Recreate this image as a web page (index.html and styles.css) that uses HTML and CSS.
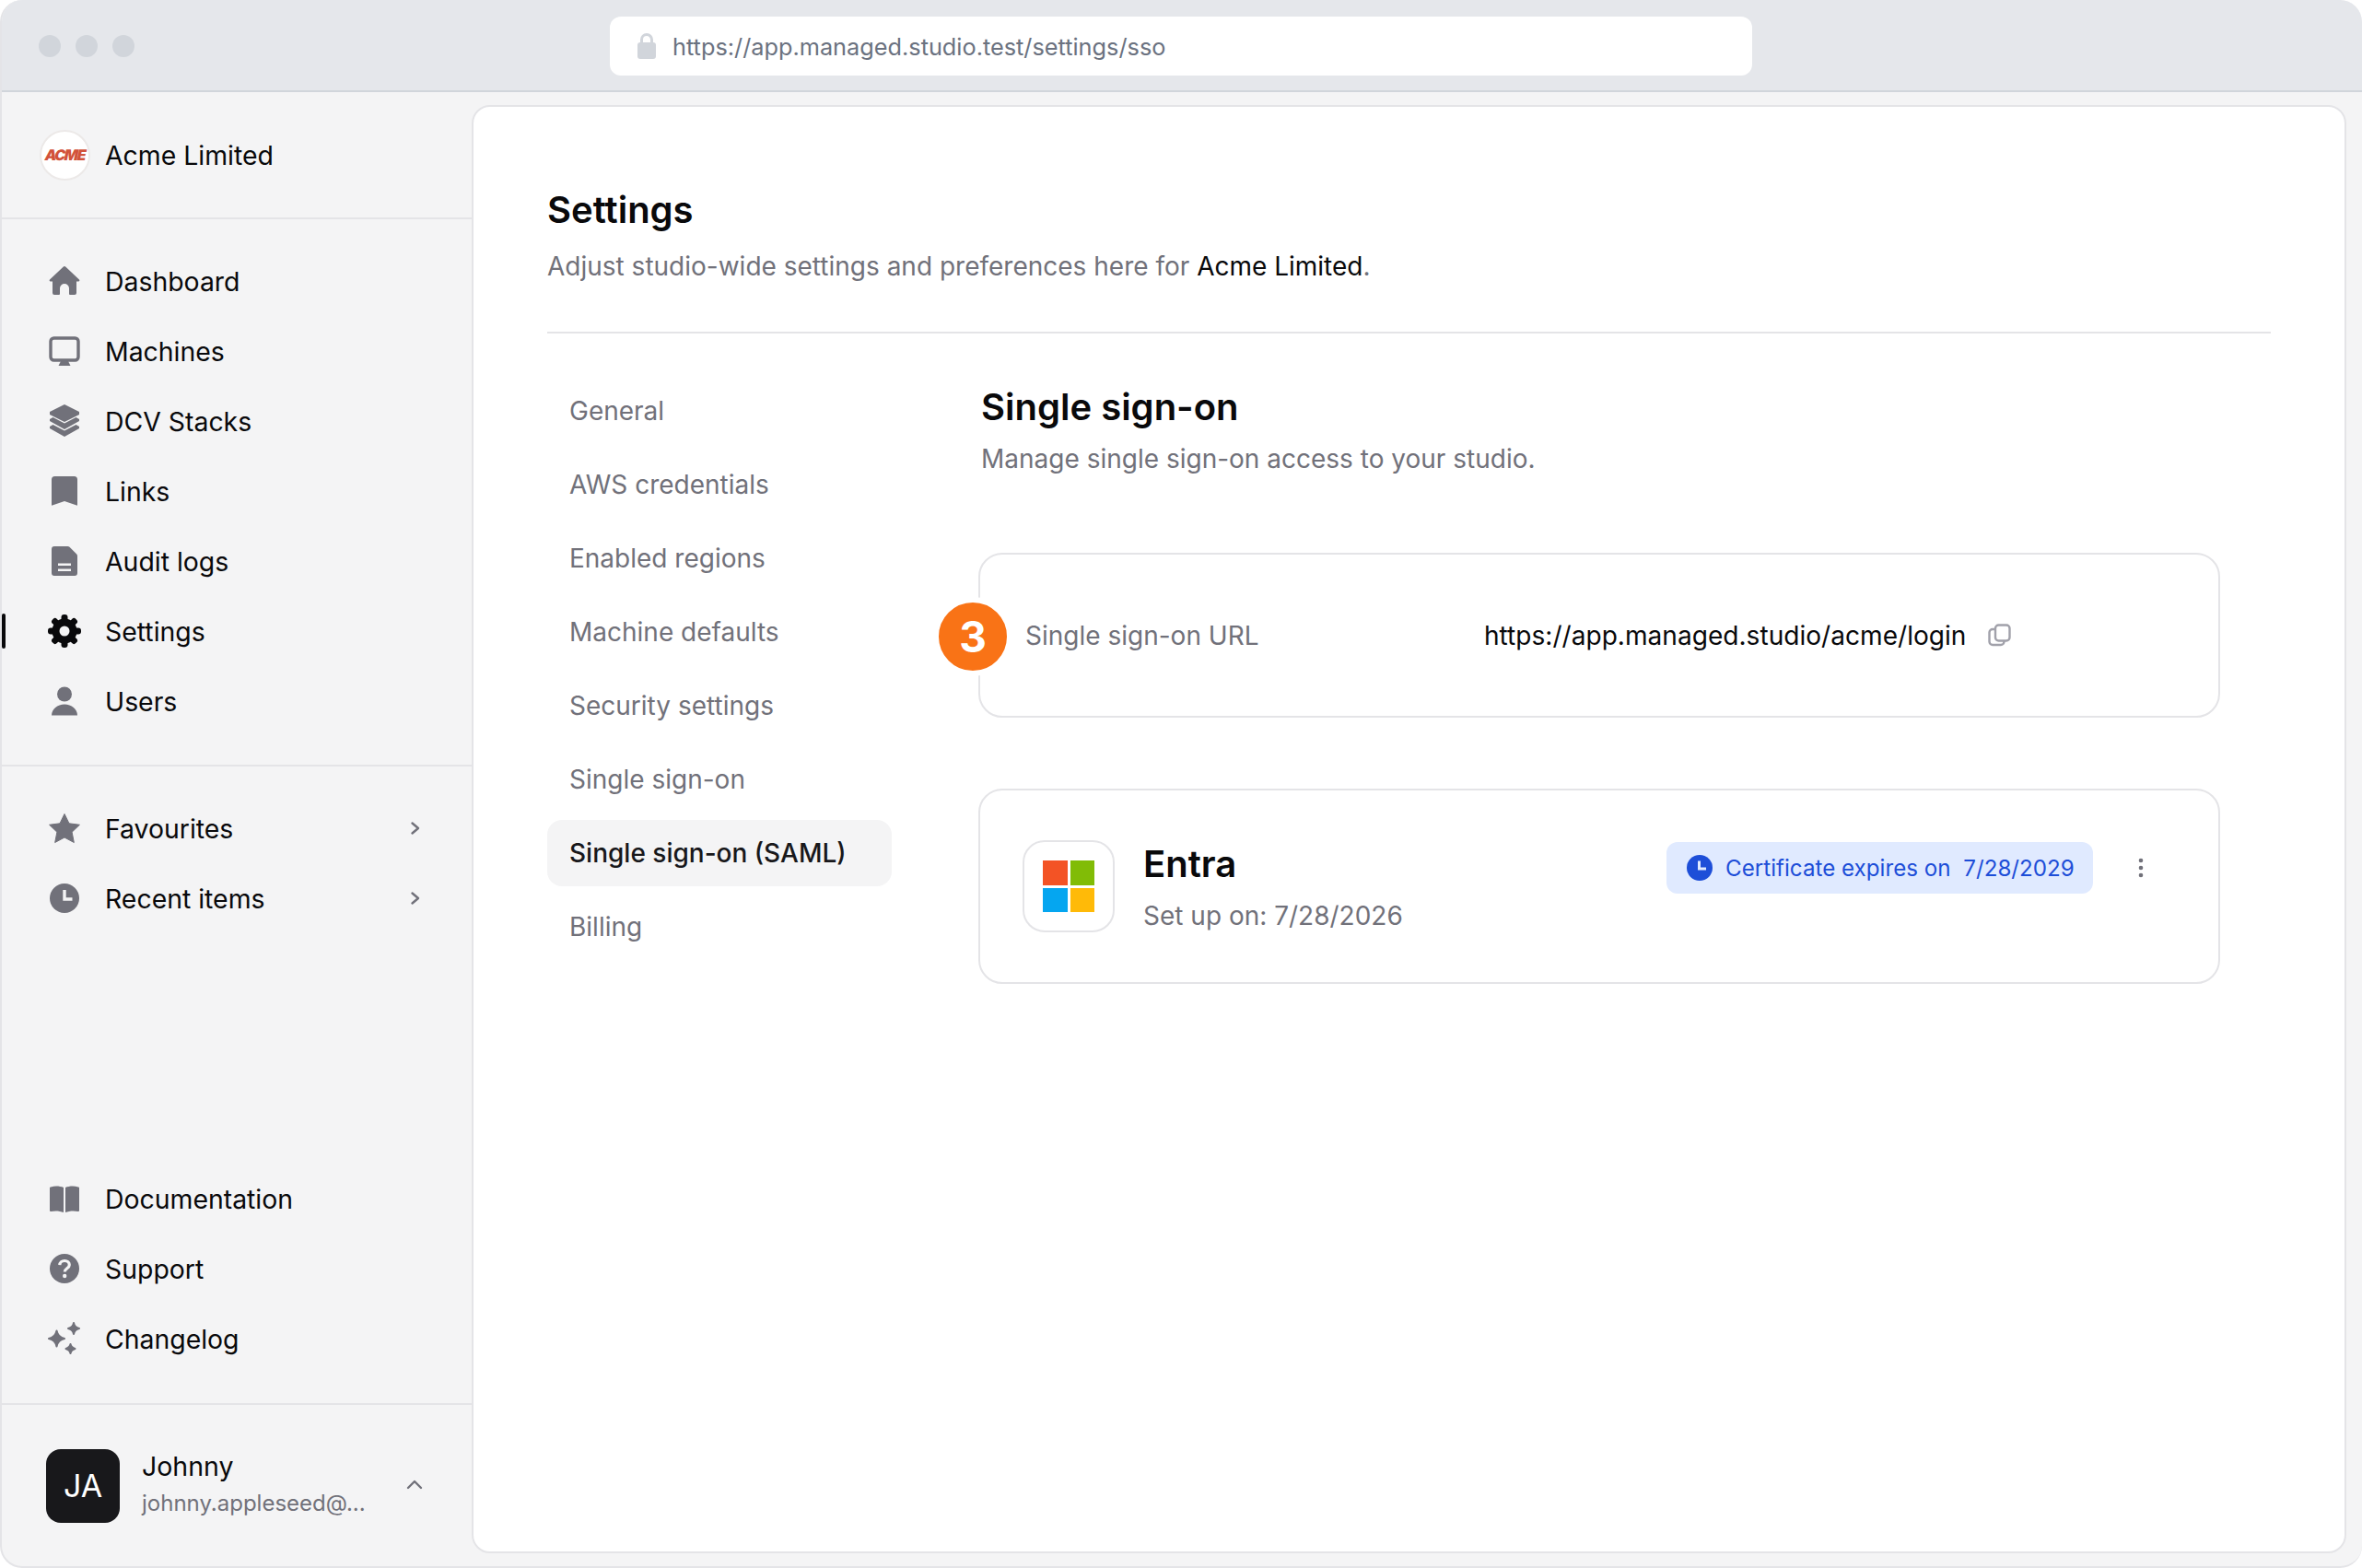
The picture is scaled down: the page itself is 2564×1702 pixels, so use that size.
FILE: index.html
```html
<!DOCTYPE html>
<html lang="en">
<head>
<meta charset="utf-8">
<title>Settings</title>
<link rel="stylesheet" href="styles.css">
</head>
<body>
<div class="window">
  <header class="topbar">
    <div class="lights"><span class="light"></span><span class="light"></span><span class="light"></span></div>
    <div class="urlbar">
      <svg class="lock" viewBox="0 0 20 28"><path d="M4.500 12V7a5.500 5.500 0 0 1 11 0v5" fill="none" stroke="#d1d5db" stroke-width="3"/><rect x="0" y="10" width="20" height="18" rx="3" fill="#d1d5db"/></svg>
      <span>https://app.managed.studio.test/settings/sso</span>
    </div>
  </header>
  <div class="app">
    <aside class="sidebar">
      <div class="brand">
        <div class="logo"><span class="logo-text">ACME</span></div>
        <span>Acme Limited</span>
      </div>
      <nav class="group group-main">
        <a class="row"><svg class="ico" viewBox="0 0 36 36"><path d="M16.600 2.800a2 2 0 0 1 2.800 0L34 16.500c.8.800.3 2-.8 2H31V31a2 2 0 0 1-2 2h-5a1 1 0 0 1-1-1v-6a5 5 0 0 0-10 0v6a1 1 0 0 1-1 1H7a2 2 0 0 1-2-2V18.500H2.800c-1.100 0-1.600-1.200-.8-2z"/></svg>Dashboard</a>
        <a class="row"><svg class="ico" viewBox="0 0 36 36"><rect x="3" y="4" width="30" height="24" rx="3.500" fill="none" stroke="#71717a" stroke-width="3.400"/><path d="M14 29h8l2.500 5h-13z"/></svg>Machines</a>
        <a class="row"><svg class="ico" viewBox="0 0 36 36"><path d="M18 0l16 8v3L18 19 2 11V8z"/><path d="M5.500 14L18 20.500 30.500 14l3.500 2v2L18 27 2 18v-2z"/><path d="M5.500 22L18 28.500 30.500 22l3.500 2v2L18 35 2 26v-2z"/></svg>DCV Stacks</a>
        <a class="row"><svg class="ico" viewBox="0 0 36 36"><path d="M7.500 2h21A3.500 3.500 0 0 1 32 5.500V33a.6.600 0 0 1-.8.600L18 29 4.800 33.600A.6.600 0 0 1 4 33V5.500A3.500 3.500 0 0 1 7.500 2z"/></svg>Links</a>
        <a class="row"><svg class="ico" viewBox="0 0 36 36"><path fill-rule="evenodd" d="M7 2h14.500a3 3 0 0 1 2 .8L31 10.200a3 3 0 0 1 1 2.200V31a3 3 0 0 1-3 3H7a3 3 0 0 1-3-3V5a3 3 0 0 1 3-3zm4 18.500v2.500h14v-2.500zm0 6v2.500h14v-2.500z"/></svg>Audit logs</a>
        <a class="row row-active"><svg class="ico ico-dark" viewBox="0 0 36 36"><g><rect x="14.500" y="0" width="7" height="36" rx="3"/><rect x="14.500" y="0" width="7" height="36" rx="3" transform="rotate(45 18 18)"/><rect x="14.500" y="0" width="7" height="36" rx="3" transform="rotate(90 18 18)"/><rect x="14.500" y="0" width="7" height="36" rx="3" transform="rotate(135 18 18)"/></g><circle cx="18" cy="18" r="9.500" fill="none" stroke="#09090b" stroke-width="8"/><circle cx="18" cy="18" r="5.500" fill="#f4f4f5"/></svg>Settings</a>
        <a class="row"><svg class="ico" viewBox="0 0 36 36"><circle cx="18" cy="10.500" r="8"/><path d="M4 33.500c0-7 6.500-12 14-12s14 5 14 12z"/></svg>Users</a>
      </nav>
      <nav class="group group-fill">
        <a class="row"><svg class="ico" viewBox="0 0 36 36"><path d="M18 2.500l5 10.300 11.400 1.500-8.300 7.900 2.200 11.300L18 28l-10.300 5.500 2.200-11.300-8.300-7.900L13 12.800z" stroke="#71717a" stroke-width="1" stroke-linejoin="round"/></svg>Favourites<svg class="chev" viewBox="0 0 12 16"><path d="M2.500 2.500L9 8l-6.500 5.500" fill="none" stroke="#71717a" stroke-width="2.400" stroke-linecap="round" stroke-linejoin="round"/></svg></a>
        <a class="row"><svg class="ico" viewBox="0 0 36 36"><circle cx="18" cy="18" r="16"/><path d="M18 9v10h8.500" fill="none" stroke="#f4f4f5" stroke-width="3.400"/></svg>Recent items<svg class="chev" viewBox="0 0 12 16"><path d="M2.500 2.500L9 8l-6.500 5.500" fill="none" stroke="#71717a" stroke-width="2.400" stroke-linecap="round" stroke-linejoin="round"/></svg></a>
      </nav>
      <nav class="group group-help">
        <a class="row"><svg class="ico" viewBox="0 0 36 36"><path d="M3 5.500c5-1.500 10-1 14 .5v27c-4-1.700-9-2-14-1a1 1 0 0 1-1-1V6.500a1 1 0 0 1 1-1z"/><path d="M33 5.500c-5-1.500-10-1-14 .5v27c4-1.700 9-2 14-1a1 1 0 0 0 1-1V6.500a1 1 0 0 0-1-1z"/></svg>Documentation</a>
        <a class="row"><svg class="ico" viewBox="0 0 36 36"><circle cx="18" cy="18" r="16"/><path d="M12.800 14.200c.2-3 2.500-4.700 5.300-4.700 3 0 5.200 1.800 5.200 4.500 0 3.800-5 3.700-5 7.500" fill="none" stroke="#f4f4f5" stroke-width="3.200"/><circle cx="18.200" cy="26" r="2.200" fill="#f4f4f5"/></svg>Support</a>
        <a class="row"><svg class="ico" viewBox="0 0 36 36"><path d="M9.500 9.500c1 5 3 7.500 8.500 8.500-5.500 1-7.500 3.500-8.500 8.500-1-5-3-7.500-8.500-8.500 5.500-1 7.500-3.500 8.500-8.500z" stroke="#71717a" stroke-width="2" stroke-linejoin="round"/><path d="M28 1c.7 3.800 2.300 5.300 6 6-3.700.7-5.300 2.200-6 6-.7-3.800-2.300-5.300-6-6 3.700-.7 5.300-2.200 6-6z" stroke="#71717a" stroke-width="2" stroke-linejoin="round"/><path d="M24.500 24c.6 3 1.700 4 5 5-3.300 1-4.400 2-5 5-.6-3-1.700-4-5-5 3.300-1 4.400-2 5-5z" stroke="#71717a" stroke-width="2" stroke-linejoin="round"/></svg>Changelog</a>
      </nav>
      <div class="account">
        <div class="avatar">JA</div>
        <div class="who">
          <div class="who-name">Johnny</div>
          <div class="who-mail">johnny.appleseed@...</div>
        </div>
        <svg class="chev-up" viewBox="0 0 18 12"><path d="M2 10L9 3l7 7" fill="none" stroke="#71717a" stroke-width="2.400" stroke-linecap="round" stroke-linejoin="round"/></svg>
      </div>
    </aside>
    <main class="main">
      <header class="head">
        <h1 class="h1">Settings</h1>
        <p class="sub">Adjust studio-wide settings and preferences here for <span class="ink">Acme Limited</span>.</p>
      </header>
      <div class="cols">
        <nav class="subnav">
          <a class="sub-item">General</a>
          <a class="sub-item">AWS credentials</a>
          <a class="sub-item">Enabled regions</a>
          <a class="sub-item">Machine defaults</a>
          <a class="sub-item">Security settings</a>
          <a class="sub-item">Single sign-on</a>
          <a class="sub-item sub-active">Single sign-on (SAML)</a>
          <a class="sub-item">Billing</a>
        </nav>
        <section class="content">
          <h2 class="h2">Single sign-on</h2>
          <p class="sub sub-2">Manage single sign-on access to your studio.</p>
          <div class="card card-url">
            <span class="step">3</span>
            <span class="url-label">Single sign-on URL</span>
            <span class="url-value">https://app.managed.studio/acme/login</span>
            <svg class="copy" viewBox="0 0 25 25"><rect x="8" y="1.500" width="15.500" height="17" rx="3.500" fill="none" stroke="#a1a1aa" stroke-width="2.400"/><path d="M8 6H5a3.500 3.500 0 0 0-3.500 3.500v10A3.500 3.500 0 0 0 5 23h9a3.500 3.500 0 0 0 3.500-3.500V18" fill="none" stroke="#a1a1aa" stroke-width="2.400"/></svg>
          </div>
          <div class="card card-idp">
            <div class="idp-logo">
              <div class="ms"><i class="ms-r"></i><i class="ms-g"></i><i class="ms-b"></i><i class="ms-y"></i></div>
            </div>
            <div class="idp-text">
              <div class="idp-name">Entra</div>
              <div class="idp-date">Set up on: 7/28/2026</div>
            </div>
            <div class="chip">
              <svg class="chip-ico" viewBox="0 0 28 28"><circle cx="14" cy="14" r="14" fill="#1d4ed8"/><path d="M13.500 6.500V15H21" fill="none" stroke="#e0eaff" stroke-width="3"/></svg>
              <span>Certificate expires on&nbsp; 7/28/2029</span>
            </div>
            <svg class="dots" viewBox="0 0 6 22"><circle cx="3" cy="3" r="2.300"/><circle cx="3" cy="11" r="2.300"/><circle cx="3" cy="19" r="2.300"/></svg>
          </div>
        </section>
      </div>
    </main>
  </div>
</div>
</body>
</html>
```
FILE: styles.css
```css
* { box-sizing: border-box; }
html, body { margin: 0; padding: 0; background: #fff; }
body { font-family: Inter, "Liberation Sans", sans-serif; color: #09090b; }
p, h1, h2 { margin: 0; }

.window { width: 2564px; height: 1702px; display: flex; flex-direction: column; background: #f4f4f5; border: 2px solid #e4e4e7; border-top: 0; border-right: 0; border-radius: 24px; overflow: hidden; }

.topbar { height: 100px; margin-left: -2px; background: #e5e7eb; border-bottom: 2px solid #d1d5db; position: relative; display: flex; justify-content: center; align-items: flex-start; padding-top: 18px; flex: none; }
.lights { position: absolute; left: 42px; top: 38px; display: flex; gap: 16px; }
.light { width: 24px; height: 24px; border-radius: 50%; background: #d1d5db; }
.urlbar { width: 1240px; height: 64px; background: #fff; border-radius: 12px; display: flex; align-items: center; gap: 18px; padding-left: 30px; font-size: 25.300px; color: #6b7280; }
.lock { width: 20px; height: 28px; flex: none; }

.app { flex: 1; display: flex; min-height: 0; }
.sidebar { width: 510px; flex: none; display: flex; flex-direction: column; }
.brand { height: 138px; flex: none; display: flex; align-items: center; gap: 16px; padding-left: 41px; font-size: 28.400px; border-bottom: 2px solid #e4e4e7; }
.logo { width: 55px; height: 55px; border-radius: 50%; background: #fff; border: 2px solid #ece9e8; display: flex; align-items: center; justify-content: center; flex: none; }
.logo-text { font-family: Inter, sans-serif; font-weight: 900; font-size: 16px; color: #d2523a; letter-spacing: -1.400px; transform: skewX(-12deg); }

.group { display: flex; flex-direction: column; }
.group-main { padding: 29px 0 31px; border-bottom: 2px solid #e4e4e7; }
.group-fill { padding-top: 29px; flex: 1; }
.group-help { padding-bottom: 32px; border-bottom: 2px solid #e4e4e7; }
.row { height: 76px; display: flex; align-items: center; padding-left: 50px; font-size: 28.400px; position: relative; color: #09090b; }
.ico { width: 36px; height: 36px; flex: none; margin-right: 26px; fill: #71717a; }
.ico-dark { fill: #09090b; }
.row-active::before { content: ""; position: absolute; left: 0; top: 19px; width: 4px; height: 38px; background: #09090b; border-radius: 2px; }
.chev { width: 12px; height: 16px; position: absolute; left: 443px; top: 30px; }

.account { height: 175px; flex: none; display: flex; align-items: center; padding-left: 48px; position: relative; }
.avatar { width: 80px; height: 80px; border-radius: 16px; background: #18181b; color: #fff; font-size: 34px; display: flex; align-items: center; justify-content: center; flex: none; margin-right: 24px; }
.who { display: flex; flex-direction: column; gap: 4px; margin-top: -3px; }
.who-name { font-size: 28.500px; line-height: 38px; }
.who-mail { font-size: 24px; line-height: 34px; color: #71717a; }
.chev-up { width: 18px; height: 12px; position: absolute; left: 439px; top: 80px; }

.main { flex: 1; margin: 14px 17px 14px 0; background: #fff; border: 2px solid #e4e4e7; border-radius: 20px; padding: 84px 80px 0 80px; min-width: 0; }
.head { height: 162px; border-bottom: 2px solid #e4e4e7; }
.h1 { font-size: 40px; font-weight: 600; line-height: 56px; }
.sub { font-size: 28px; line-height: 40px; color: #71717a; margin-top: 13px; }
.ink { color: #09090b; }
.cols { display: flex; }
.subnav { width: 374px; flex: none; padding-top: 48px; display: flex; flex-direction: column; gap: 8px; }
.sub-item { height: 72px; display: flex; align-items: center; padding-left: 24px; font-size: 28px; color: #71717a; border-radius: 16px; }
.sub-active { background: #f4f4f5; color: #18181b; font-weight: 500; }
.content { flex: 1; padding-left: 94px; padding-top: 52px; min-width: 0; }
.h2 { font-size: 40px; font-weight: 600; line-height: 56px; padding-left: 3px; }
.sub-2 { padding-left: 3px; margin-top: 8px; }

.card { width: 1348px; border: 2px solid #e4e4e7; border-radius: 26px; background: #fff; display: flex; align-items: center; position: relative; }
.card-url { height: 179px; margin-top: 82px; padding-left: 49px; }
.step { position: absolute; left: -51px; top: 46px; width: 86px; height: 86px; border: 6px solid #fff; border-radius: 50%; background: #f97316; color: #fff; font-size: 46px; font-weight: 700; display: flex; align-items: center; justify-content: center; }
.url-label { width: 498px; font-size: 28px; color: #71717a; flex: none; }
.url-value { font-size: 28.100px; }
.copy { width: 25px; height: 25px; margin-left: 24px; flex: none; }

.card-idp { height: 212px; margin-top: 77px; padding-left: 46px; }
.idp-logo { width: 100px; height: 100px; border: 2px solid #e4e4e7; border-radius: 24px; display: flex; align-items: center; justify-content: center; flex: none; margin-right: 31px; }
.ms { width: 56px; height: 56px; display: grid; grid-template-columns: 1fr 1fr; grid-template-rows: 1fr 1fr; gap: 3px; }
.ms i { display: block; }
.ms-r { background: #f35325; }
.ms-g { background: #81bc06; }
.ms-b { background: #05a6f0; }
.ms-y { background: #ffba08; }
.idp-text { display: flex; flex-direction: column; gap: 8px; }
.idp-name { font-size: 40px; font-weight: 600; line-height: 56px; }
.idp-date { font-size: 28px; line-height: 40px; color: #71717a; }
.chip { position: absolute; left: 745px; top: 56px; width: 463px; height: 56px; background: #e0eaff; border-radius: 12px; display: flex; align-items: center; gap: 14px; padding-left: 22px; color: #1d4ed8; font-size: 24.200px; }
.chip-ico { width: 28px; height: 28px; flex: none; }
.dots { position: absolute; left: 1257px; top: 73px; width: 6px; height: 22px; fill: #71717a; }
```
